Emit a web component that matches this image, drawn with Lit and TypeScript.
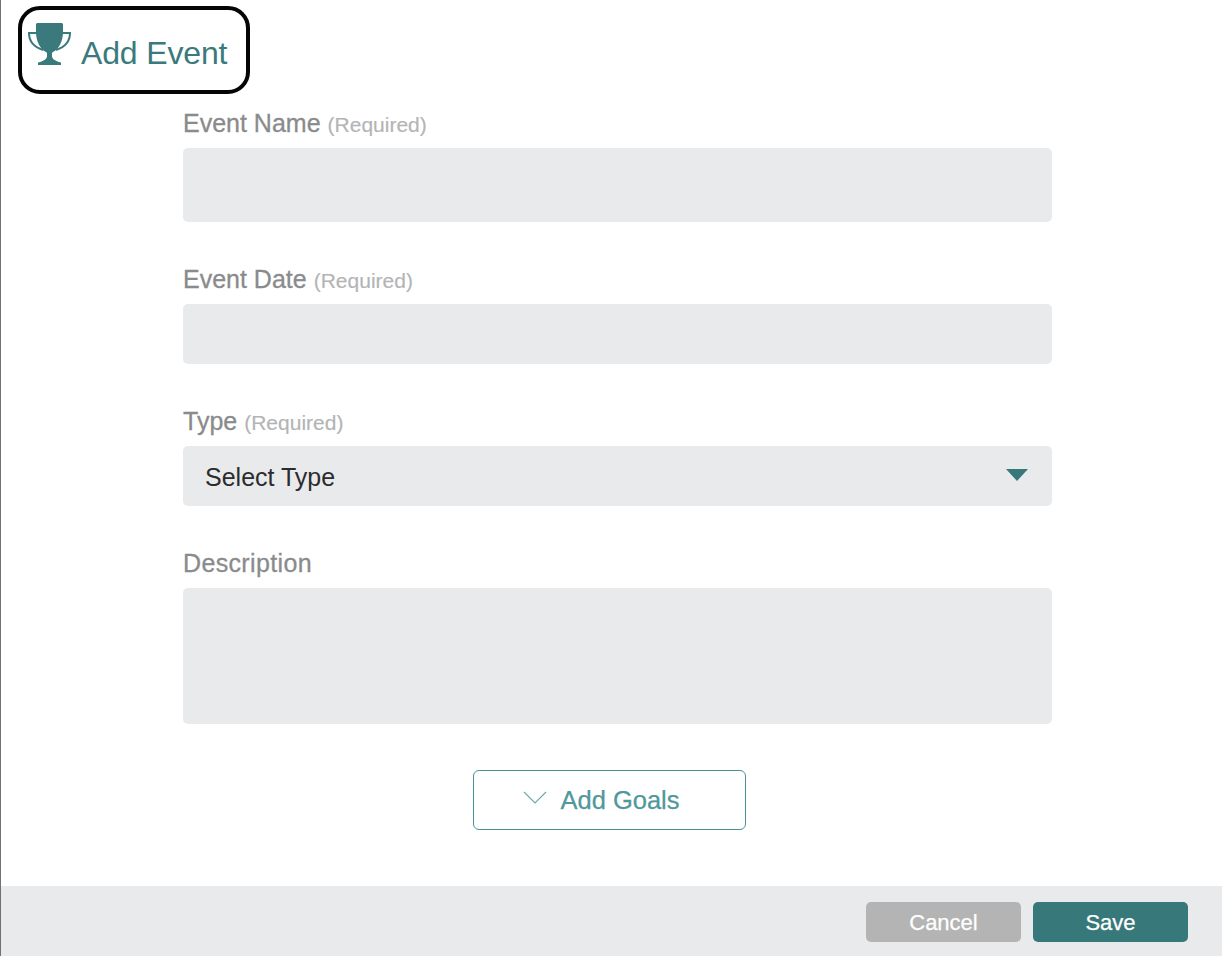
import { LitElement, html, css } from "lit";
import { customElement } from "lit/decorators.js";

const field = (label: string, req: boolean, cls: string, body: unknown = "", labelCls = "") => html`
  <div class="field">
    <div class="label ${labelCls}">${label}${req ? html`<span class="req">(Required)</span>` : ""}</div>
    <div class="box ${cls}">${body}</div>
  </div>`;

@customElement("app-root")
export class AppRoot extends LitElement {
  static styles = css`
    :host { display: flex; flex-direction: column; height: 956px; box-sizing: border-box; border-left: 1px solid #6f7173; background: #fff; font-family: "Liberation Sans", Arial, sans-serif; overflow: hidden; }
    main { flex: 1; padding: 6px 0 0 17px; }
    .title { display: flex; align-items: center; box-sizing: border-box; width: 232px; height: 88px; padding: 0 0 0 6px; border: 4px solid #050505; border-radius: 22px; color: #3a7a7c; font-size: 32px; letter-spacing: -0.15px; }
    .title svg { width: 46px; height: 46px; margin: -8px 7px 0 0; flex: none; }
    .title span { position: relative; top: 3px; }
    form { display: flex; flex-direction: column; align-items: stretch; width: 869px; margin: 15px 0 0 165px; gap: 43px; }
    .label { height: 30px; line-height: 28px; margin-bottom: 9px; font-size: 25px; color: #8a8b8c; -webkit-text-stroke: 0.3px #8a8b8c; }
    .wide { letter-spacing: 0.35px; }
    .req { font-size: 21px; color: #b3b4b5; margin-left: 7px; letter-spacing: 0; -webkit-text-stroke: 0.15px #b3b4b5; }
    .box { background: #e9eaec; border-radius: 5px; box-sizing: border-box; }
    .h74 { height: 74px; } .h60 { height: 60px; } .h136 { height: 136px; }
    .select { display: flex; align-items: center; justify-content: space-between; padding: 2px 24px 0 22px; font-size: 25px; color: #2c2c2e; }
    .select svg { width: 22px; height: 12px; margin-top: -5px; }
    .goals { align-self: flex-start; display: flex; align-items: center; justify-content: center; box-sizing: border-box; width: 273px; height: 60px; margin: 3px 0 0 290px; border: 1px solid #4b9095; border-radius: 6px; color: #4f989b; font-size: 25.5px; background: #fff; font-family: inherit; padding: 0 15px 0 0; -webkit-text-stroke: 0.25px #4f989b; }
    .goals svg { width: 24px; height: 14px; margin: -4px 13px 0 -1px; }
    footer { display: flex; justify-content: flex-end; gap: 12px; height: 70px; box-sizing: border-box; padding: 16px 34px 0 0; background: #e9eaec; }
    footer button { width: 155px; height: 40px; border: 0; border-radius: 5px; color: #fff; font: 22px "Liberation Sans", Arial, sans-serif; padding: 2px 0 0; -webkit-text-stroke: 0.25px #fff; }
    .cancel { background: #b4b4b4; } .save { background: #37797a; }
  `;
  render() {
    return html`
      <main>
        <div class="title">
          <svg viewBox="0 0 46 46" aria-hidden="true">
            <path fill="#3a7a7c" d="M10 0h23c1.500 0 2 .5 2 2v7c0 9-4 17-10 20-.8.4-1 1-1 2v2c0 3 3 5 9 6.500V42H10v-2.500c6-1.500 9-3.500 9-6.500v-2c0-1-.2-1.600-1-2C12 26 8 18 8 9V2c0-1.500.5-2 2-2z"/>
            <path fill="none" stroke="#3a7a7c" stroke-width="2" d="M9 10H1c0 8 5 14 14 17M34 10h8c0 8-5 14-14 17"/>
          </svg>
          <span>Add Event</span>
        </div>
        <form>
          ${field("Event Name", true, "h74")}
          ${field("Event Date", true, "h60")}
          ${field("Type", true, "h60 select", html`<span>Select Type</span>
            <svg viewBox="0 0 22 12"><path fill="#37797a" d="M0 0h22L11 12z"/></svg>`)}
          ${field("Description", false, "h136", "", "wide")}
          <button class="goals" type="button">
            <svg viewBox="0 0 24 14"><path fill="none" stroke="#6fa9ac" stroke-width="1.2" d="M1 1l11 11L23 1"/></svg>
            Add Goals
          </button>
        </form>
      </main>
      <footer>
        <button class="cancel" type="button">Cancel</button>
        <button class="save" type="button">Save</button>
      </footer>
    `;
  }
}
